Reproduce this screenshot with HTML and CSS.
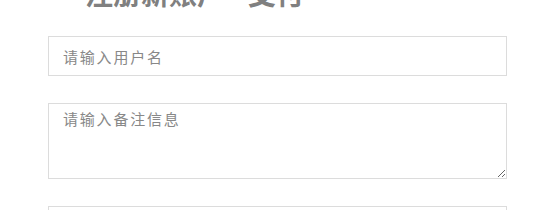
FILE: index.html
```html
<!DOCTYPE html>
<html lang="zh-CN">
<head>
    <meta charset="UTF-8">
    <meta name="viewport" content="width=device-width, initial-scale=1.0">
    <title>注册新账户</title>
    <link rel="stylesheet" href="styles.css">
</head>
<body>
    <div class="form">
        <h2>注册新账户 - 支付</h2>
        <input type="text" class="field" placeholder="请输入用户名">
        <textarea class="field note" placeholder="请输入备注信息"></textarea>
        <input type="text" class="field" placeholder="请输入联系电话">
    </div>
</body>
</html>
```

FILE: styles.css
```css
body {
    margin: 0;
    background-color: #fff;
    font-family: "Noto Sans CJK SC", "Noto Sans", sans-serif;
}
.form {
    width: 459px;
    margin-left: 48px;
}
h2 {
    margin: -23px 0 0 37px;
    font-size: 28px;
    line-height: 32px;
    font-weight: bold;
    color: #808080;
}
.field {
    display: block;
    width: 100%;
    height: 40px;
    box-sizing: border-box;
    margin-top: 27px;
    padding: 0 14px;
    border: 1px solid #dcdcdc;
    font-family: inherit;
    font-size: 15px;
    letter-spacing: 1.8px;
    color: #333;
    outline: none;
}
.field::placeholder {
    color: #888;
}
.note {
    height: 76px;
    padding: 4px 14px;
    resize: vertical;
}
```
